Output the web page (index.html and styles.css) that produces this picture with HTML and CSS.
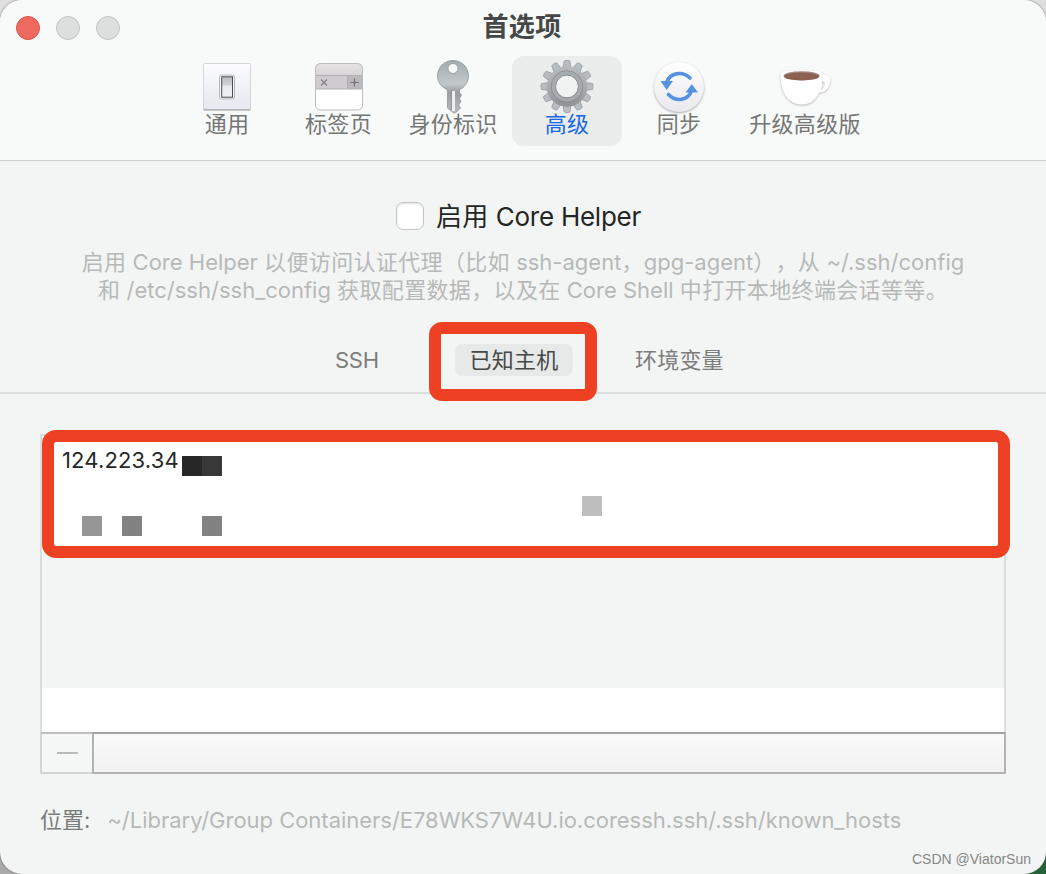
FILE: index.html
```
<!DOCTYPE html>
<html lang="zh-CN">
<head>
<meta charset="utf-8">
<title>首选项</title>
<link rel="stylesheet" href="styles.css">
</head>
<body>
<main class="window">
  <header class="toolbar">
    <div class="titlebar">
      <div class="lights"><i class="light close"></i><i class="light"></i><i class="light"></i></div>
      <h1 class="title">首选项</h1>
    </div>
    <nav class="tools">
      <a class="tool">
        <svg class="icon" width="56" height="56" viewBox="0 1 56 56">
          <defs><linearGradient id="plate" x2="0" y2="1"><stop stop-color="#fcfcfe"/><stop offset="1" stop-color="#e5e8ee"/></linearGradient>
          <linearGradient id="switch" x2="0" y2="1"><stop stop-color="#b9bcbf"/><stop offset=".42" stop-color="#d4d7d9"/><stop offset=".45" stop-color="#e9ecee"/><stop offset="1" stop-color="#eef1f3"/></linearGradient></defs>
          <rect x="4.500" y="5.500" width="47" height="46.500" rx="1" fill="url(#plate)" stroke="#d3d5d8"/>
          <path d="M4.500 51.800h47" stroke="#a5a8ab" stroke-width="1.300"/>
          <rect x="20.500" y="17" width="15" height="24" rx="2" fill="#f5f5f5" stroke="#b7b8ba"/>
          <rect x="22.700" y="18.800" width="10.800" height="20.400" fill="url(#switch)" stroke="#4b4c4e" stroke-width="1"/>
        </svg>
        <span class="tool-label">通用</span>
      </a>
      <a class="tool">
        <svg class="icon" width="56" height="56" viewBox="0 1 56 56">
          <defs><linearGradient id="bar" x2="0" y2="1"><stop stop-color="#e7e4e6"/><stop offset="1" stop-color="#d8d5d7"/></linearGradient></defs>
          <rect x="4.500" y="5.500" width="47" height="46.500" rx="5" fill="#fff"/>
          <path d="M4.500 17v-7a5 5 0 0 1 5-5h37a5 5 0 0 1 5 5v7z" fill="url(#bar)"/>
          <path d="M4.500 17h47v14h-47z" fill="#cecccf"/>
          <path d="M36.500 17h15v14h-15z" fill="#bbb9bc"/>
          <path d="M4.500 17.500h47M4.500 31h47M36.500 17.500v13" stroke="#b0aeb1"/>
          <path d="M10 21.500l6 6m0-6l-6 6" stroke="#858387" stroke-width="1.300"/>
          <path d="M39.500 24.500h8m-4-4v8" stroke="#706e72" stroke-width="1.200"/>
          <rect x="4.500" y="5.500" width="47" height="46.500" rx="5" fill="none" stroke="#bcbbbd"/>
        </svg>
        <span class="tool-label">标签页</span>
      </a>
      <a class="tool">
        <svg class="icon" width="56" height="56" viewBox="0 1 56 56">
          <defs><linearGradient id="key" x2="0" y2="1"><stop stop-color="#a3abae"/><stop offset=".45" stop-color="#c3c9cb"/><stop offset=".6" stop-color="#979da0"/><stop offset="1" stop-color="#b9bebf"/></linearGradient></defs>
          <path fill-rule="evenodd" d="M28 2.500c8.800 0 15.500 7 15.500 15.300 0 6.500-4 11.500-9 13.900v2.800l2 2.500-2 3.500 1.500 3-2.500 3.500 2 3-4 4c-1 1.300-3 1.300-4 0l-5-4V31.700c-6-2.400-10-7.400-10-13.900C12.500 9.500 19.200 2.500 28 2.500zM28 5.500a5 5 0 1 0 0 10 5 5 0 0 0 0-10z" fill="url(#key)" stroke="#8e9699" stroke-width=".8"/>
          <path d="M28.500 33v20" stroke="#efefef" stroke-width="3"/>
          <path d="M26.400 33v19" stroke="#858b8e" stroke-width=".8"/>
        </svg>
        <span class="tool-label">身份标识</span>
      </a>
      <a class="tool selected">
        <svg class="icon" width="56" height="56" viewBox="0 0.500 56 56">
          <defs><linearGradient id="metal" gradientUnits="userSpaceOnUse" x1="28" y1="2" x2="28" y2="55"><stop stop-color="#b9bfc2"/><stop offset=".5" stop-color="#a9adaf"/><stop offset="1" stop-color="#858788"/></linearGradient>
          <path id="tooth" d="M25.100 2.400q2.900-1.200 5.800 0l1.200 7.600h-8.200z"/></defs>
          <g fill="url(#metal)" stroke="#868b8e" stroke-width=".6">
            <use href="#tooth"/><use href="#tooth" transform="rotate(30 28 28)"/><use href="#tooth" transform="rotate(60 28 28)"/><use href="#tooth" transform="rotate(90 28 28)"/><use href="#tooth" transform="rotate(120 28 28)"/><use href="#tooth" transform="rotate(150 28 28)"/><use href="#tooth" transform="rotate(180 28 28)"/><use href="#tooth" transform="rotate(210 28 28)"/><use href="#tooth" transform="rotate(240 28 28)"/><use href="#tooth" transform="rotate(270 28 28)"/><use href="#tooth" transform="rotate(300 28 28)"/><use href="#tooth" transform="rotate(330 28 28)"/>
          </g>
          <circle cx="28" cy="28" r="15.500" fill="none" stroke="url(#metal)" stroke-width="9.500"/>
          <circle cx="28" cy="28" r="15.800" fill="none" stroke="#888d90"/>
          <circle cx="28" cy="28" r="13.500" fill="none" stroke="#a5abae" stroke-width="3"/>
          <circle cx="28" cy="28" r="11.400" fill="#f1f2f2" stroke="#85898c"/>
        </svg>
        <span class="tool-label">高级</span>
      </a>
      <a class="tool">
        <svg class="icon sync-icon" width="56" height="56" viewBox="0 0 56 56">
          <defs><linearGradient id="disc" x2="0" y2="1"><stop stop-color="#fff"/><stop offset="1" stop-color="#e9e9ee"/></linearGradient></defs>
          <circle cx="28" cy="28" r="25" fill="url(#disc)"/>
          <path d="M15.500 23.500C18.500 14 31 11.500 39 19" fill="none" stroke="#5592df" stroke-width="3.600" stroke-linecap="round"/>
          <path d="M40.500 31.500C37.500 41.500 25 43.500 17.500 35.500" fill="none" stroke="#5592df" stroke-width="3.600" stroke-linecap="round"/>
          <path d="M9.500 22h12.500l-6.300 9zM34.500 33.500h12.500L40.800 25z" fill="#5592df"/>
        </svg>
        <span class="tool-label">同步</span>
      </a>
      <a class="tool">
        <svg class="icon cup-icon" width="56" height="56" viewBox="0 -0.500 56 56">
          <path fill-rule="evenodd" d="M3.500 16c0-5 4-5 21-5 16 0 21 0 21 4.500 5-1.500 9 2 7.500 7.500-1 6-5 10-11 10C38 41.500 32.500 45 25 45 12 45 3.500 34 3.500 16zM45 22c0 5-.5 7-1.300 9 4-1 6-10 1.300-9z" fill="#fff"/>
          <ellipse cx="24.600" cy="16.300" rx="18" ry="4.500" fill="#a88c84"/>
          <ellipse cx="24.600" cy="17" rx="17.500" ry="3.900" fill="#8b6252"/>
        </svg>
        <span class="tool-label">升级高级版</span>
      </a>
    </nav>
  </header>

  <section class="helper">
    <label class="check"><i class="box"></i><span class="check-text"><span class="han">启用</span> Core Helper</span></label>
    <p class="desc"><span class="line"><span class="han">启用</span> Core Helper <span class="han">以便访问认证代理（比如</span> ssh-agent<span class="han">，</span>gpg-agent<span class="han">），从</span> ~/.ssh/config</span><span class="line"><span class="han">和</span> /etc/ssh/ssh_config <span class="han">获取配置数据，以及在</span> Core Shell <span class="han">中打开本地终端会话等等。</span></span></p>
  </section>

  <nav class="tabs">
    <span class="tab ssh">SSH</span>
    <span class="tab-frame"><span class="tab active">已知主机</span></span>
    <span class="tab">环境变量</span>
  </nav>

  <section class="hosts">
    <div class="list">
      <div class="row marked"><span class="host">124.223.34</span>
        <i class="mosaic m1"></i><i class="mosaic m2"></i><i class="mosaic m3"></i><i class="mosaic m4"></i><i class="mosaic m5"></i><i class="mosaic m6"></i>
      </div>
      <div class="row last"></div>
    </div>
    <div class="footer"><button class="remove"><i class="minus"></i></button><div class="filler"></div></div>
  </section>

  <div class="location"><span class="loc-label">位置:</span><span class="path">~/Library/Group Containers/E78WKS7W4U.io.coressh.ssh/.ssh/known_hosts</span></div>
  <div class="watermark">CSDN @ViatorSun</div>
</main>
</body>
</html>
```
FILE: styles.css
```
* { box-sizing: border-box; }
body {
  margin: 0;
  height: 874px;
  overflow: hidden;
  background: linear-gradient(90deg, #aaa 50%, #25633a 50%) bottom / 100% 838px no-repeat, #dedede;
  font-family: Inter, "Noto Sans CJK SC", sans-serif;
  font-size: 22px;
  text-spacing-trim: space-all;
}
.window {
  position: relative;
  display: flex;
  flex-direction: column;
  height: 874px;
  border-radius: 22px;
  overflow: hidden;
  background: #f3f5f4;
  box-shadow: 0 0 2px #555;
}
.toolbar {
  height: 161px;
  flex: none;
  background: #f8faf9;
  border-bottom: 1px solid #cdcfce;
}
.titlebar {
  display: grid;
  grid-template-columns: 1fr auto 1fr;
  align-items: center;
  height: 56px;
  padding: 0 16px;
}
.lights { display: flex; gap: 16px; }
.light {
  width: 24px;
  height: 24px;
  border-radius: 50%;
  border: 1px solid #c1c3c2;
  background: #dddfde;
}
.light.close { background: #ee6a5f; border-color: #d8564c; }
.title {
  margin: 0 2px 2px 0;
  font-size: 26px;
  line-height: 32px;
  font-weight: 700;
  letter-spacing: 0.4px;
  color: #464847;
}
.tools {
  display: grid;
  grid-template-columns: 112px 111px 118px 110px 114px 138px;
  padding-left: 171px;
}
.tool {
  display: flex;
  flex-direction: column;
  align-items: center;
  height: 90px;
  padding-top: 3px;
  border-radius: 12px;
  color: #747675;
}
.icon { flex: none; display: block; }
.tool-label { line-height: 22px; margin-top: -2px; white-space: nowrap; letter-spacing: 0.3px; }
.selected { background: #ebedec; color: #1a67e5; }
.sync-icon { filter: drop-shadow(0 1px 1px #aaa); }
.cup-icon { filter: drop-shadow(0 1px 1px #bbb); }
.helper {
  flex: none;
  height: 160px;
  padding-top: 39px;
  display: flex;
  flex-direction: column;
  align-items: center;
}
.han { letter-spacing: 0.35px; }
.check {
  display: flex;
  align-items: center;
  gap: 12px;
  height: 32px;
  margin-right: 9px;
  font-size: 26px;
  letter-spacing: -0.25px;
  color: #242625;
}
.check-text { line-height: 32px; padding-top: 2px; white-space: nowrap; }
.box {
  width: 28px;
  height: 28px;
  border: 1px solid #c6c8c7;
  border-radius: 7px;
  background: #fff;
  box-shadow: inset 0 1px 2px #ddd;
}
.desc { margin: 16px 0 0; color: #b7b9b8; line-height: 28px; text-align: center; }
.line { display: block; white-space: nowrap; }
.tabs {
  display: flex;
  flex: none;
  height: 73px;
  padding-left: 335px;
  border-bottom: 2px solid #dcdedd;
  color: #7c7e7d;
}
.tab { line-height: 32px; margin-top: 23px; height: 32px; letter-spacing: 0.2px; }
.ssh { width: 94px; letter-spacing: -0.3px; }
.tab-frame {
  position: relative;
  z-index: 1;
  width: 168px;
  height: 79px;
  margin: 1px 38px 0 0;
  padding: 10px 0 0 14px;
  border: 12px solid #ee4023;
  border-radius: 13px;
  background: linear-gradient(#f3f5f4, #f3f5f4) padding-box;
}
.active {
  display: block;
  width: 118px;
  margin: 0;
  border-radius: 8px;
  background: #e7e9e8;
  color: #464847;
  text-align: center;
}
.hosts { flex: none; margin: 40px 40px 0; height: 340px; }
.list {
  display: flex;
  flex-direction: column;
  justify-content: space-between;
  height: 298px;
  border: solid #dcdedd;
  border-width: 2px 2px 0;
}
.row.marked {
  position: relative;
  flex: none;
  width: 968px;
  height: 128px;
  margin: -6px 0 0 0;
  padding: 7px 8px;
  border: 12px solid #ee4023;
  border-radius: 14px;
  background: linear-gradient(#fff, #fff) padding-box;
}
.host { display: block; line-height: 22px; letter-spacing: 0.15px; color: #262827; }
.row.last { height: 44px; background: #fff; }
.mosaic { position: absolute; width: 20px; height: 20px; }
.m1 { left: 128px; top: 14px; background: #272727; }
.m2 { left: 148px; top: 14px; background: #383838; }
.m3 { left: 28px; top: 74px; background: #969696; }
.m4 { left: 68px; top: 74px; background: #828282; }
.m5 { left: 148px; top: 74px; background: #828282; }
.m6 { left: 528px; top: 54px; background: #bebebe; }
.footer { display: flex; height: 42px; }
.remove {
  display: grid;
  place-items: center;
  width: 52px;
  padding: 0;
  border: solid #d3d5d4;
  border-width: 2px 0 2px 2px;
  border-top-color: #bdbfbe;
  background: #f5f7f6;
}
.minus { width: 21px; height: 2px; background: #b9bbba; }
.filler {
  flex: 1;
  border: 2px solid #b3b3b3;
  border-top-color: #a2a2a2;
  background: linear-gradient(#fafafa, #f2f2f2);
}
.location { display: flex; gap: 17px; margin: 31px 0 0 40px; line-height: 30px; white-space: nowrap; }
.loc-label { color: #7a7c7b; }
.path { color: #b7b9b8; letter-spacing: -0.025px; }
.watermark {
  position: absolute;
  right: 15px;
  bottom: 6px;
  font: 14px/18px "Liberation Sans", sans-serif;
  color: #858786;
}
```
